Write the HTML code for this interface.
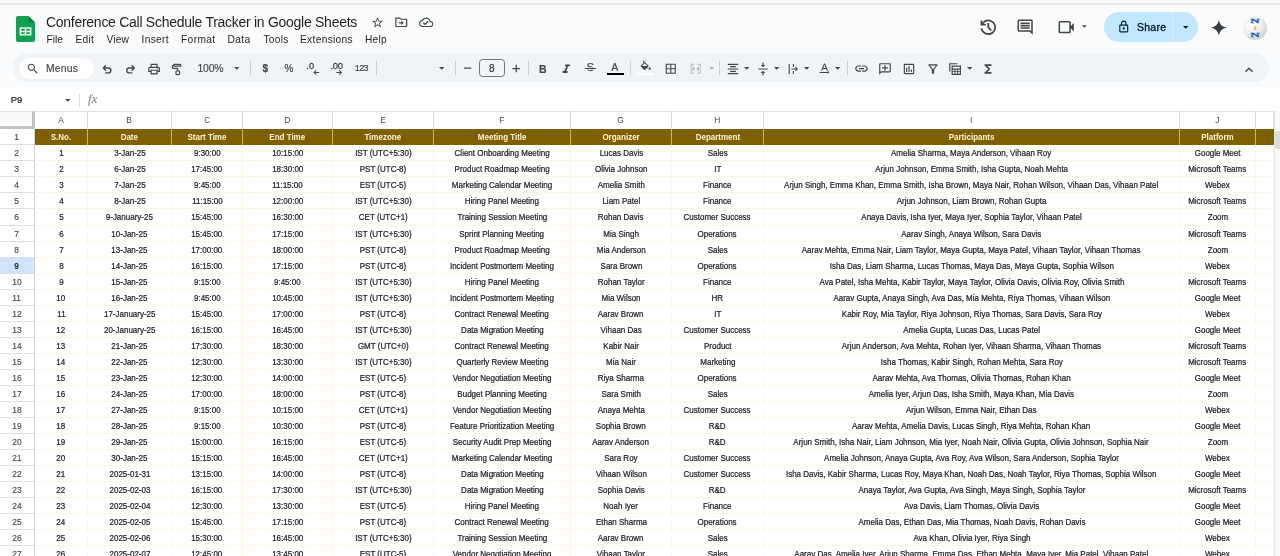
<!DOCTYPE html><html><head><meta charset="utf-8"><title>Conference Call Schedule Tracker in Google Sheets</title><style>
*{box-sizing:border-box;margin:0;padding:0}
html,body{width:1280px;height:556px;overflow:hidden}
body{background:#f9fbfd;font-family:"Liberation Sans",sans-serif;color:#1f1f1f;position:relative}
.abs{position:absolute}
#topband{position:absolute;left:0;top:0;width:1280px;height:3px;background:#fafafa}
#topline{position:absolute;left:0;top:3px;width:1280px;height:2px;background:#e8e8e8}
#title{position:absolute;left:46px;top:14.3px;font-size:14px;line-height:16px;color:#1f1f1f;white-space:nowrap;letter-spacing:-0.276px}
.menu{position:absolute;top:33.5px;font-size:10.2px;line-height:12px;color:#1f1f1f;white-space:nowrap}
#tb{position:absolute;left:12.5px;top:53px;width:1256.5px;height:29.2px;border-radius:14.6px;background:#f0f4f9}
#search{position:absolute;left:19px;top:58px;width:75px;height:21px;border-radius:11px;background:#fff}
.tbt{position:absolute;font-size:10px;line-height:12px;color:#444746;white-space:nowrap;-webkit-text-stroke:0.15px #444746}
.sep{position:absolute;width:1px;background:#c7c7c7}
#fbar{position:absolute;left:0;top:87px;width:1280px;height:24px;background:#fff;border-top:1px solid #fcfdfe}
#grid{position:absolute;left:0;top:0;width:1280px;height:556px;pointer-events:none}
.chrow{position:absolute;left:0;width:1280px;background:#fff;border-top:1px solid #e1e1e1}
.corner{position:absolute;left:0;background:#f8f9fa;border-right:3px solid #c3c4c5;border-bottom:3px solid #c3c4c5;border-top:1px solid #e1e1e1}
.ch{position:absolute;background:#fff;border-right:1px solid #d9d9d9;border-top:1px solid #e1e1e1;font-size:9px;line-height:16px;text-align:center;color:#444746}
.hdrbg{position:absolute;background:#7f6000}
.hc{position:absolute;border-right:1px solid #d9b650;font-size:8.6px;font-weight:700;line-height:17px;text-align:center;color:#fff5d4;white-space:nowrap}
.rh{position:absolute;left:0;background:#fff;border-right:1px solid #d3d5d8;border-bottom:1px solid #dcdfe2;font-size:9px;line-height:16px;-webkit-text-stroke:0.15px #444746;text-align:center;color:#444746}
.rh.sel{background:#d3e3fd;color:#0b2a5c;font-weight:700;-webkit-text-stroke:0}
.c{position:absolute;background:#fff;border-right:1px solid #fef7e8;border-bottom:1px solid #fef6e6;font-size:8.6px;line-height:16px;text-align:center;color:#1a1a1a;-webkit-text-stroke:0.22px #1a1a1a;white-space:nowrap;overflow:hidden}
.vsb{position:absolute;left:1274px;top:111px;width:6px;height:445px;background:#f8f9fa;border-left:1px solid #e4e4e4}
.vthumb{position:absolute;left:1275px;top:131px;width:5px;height:18px;background:#dadce0;border-radius:2px 0 0 2px}

.t{display:inline-block;transform:scaleX(0.93);transform-origin:50% 50%}

#share{position:absolute;left:1104px;top:11.5px;width:93.5px;height:30.5px;border-radius:15.5px;background:#c2e7ff}
#sharediv{position:absolute;left:1172px;top:11.5px;width:1px;height:30.5px;background:#d9effd}
#sharetxt{position:absolute;left:1137px;top:20.5px;font-size:10.5px;line-height:12px;font-weight:400;letter-spacing:0.244px;-webkit-text-stroke:0.35px #001d35;color:#001d35}

#grid,#topwrap{will-change:transform}

.hc.last{border-right:none}

</style></head><body>
<div id="topwrap"><div id="topband"></div><div id="topline"></div>
<svg class="abs" style="left:16px;top:16px" width="19" height="26" viewBox="0 0 19 26">
<path d="M2 0h10.5L19 6.5V24a2 2 0 0 1-2 2H2a2 2 0 0 1-2-2V2a2 2 0 0 1 2-2z" fill="#12a150"/>
<path d="M12.5 0L19 6.5h-4.7a1.8 1.8 0 0 1-1.8-1.8z" fill="#0b8040"/>
<path d="M3.6 11.2h11.8v8.4H3.6zM5.2 12.8v1.9h3.5v-1.9zm5.1 0v1.9h3.5v-1.9zM5.2 16.2V18h3.5v-1.8zm5.1 0V18h3.5v-1.8z" fill="#e8f6ee" fill-rule="evenodd"/>
</svg>
<div id="title">Conference Call Schedule Tracker in Google Sheets</div>
<svg class="abs" style="left:371.20px;top:15.50px" width="13" height="13" viewBox="0 0 24 24" fill="#444746" ><path d="M22 9.24l-7.19-.62L12 2 9.19 8.63 2 9.24l5.46 4.73L5.82 21 12 17.27 18.18 21l-1.63-7.03L22 9.24zM12 15.4l-3.76 2.27 1-4.28-3.32-2.88 4.38-.38L12 6.1l1.71 4.04 4.38.38-3.32 2.88 1 4.28L12 15.4z"/></svg>
<svg class="abs" style="left:394.25px;top:14.95px" width="14.5" height="14.5" viewBox="0 0 24 24" fill="#444746" ><path d="M20 6h-8l-2-2H4c-1.1 0-2 .9-2 2v12c0 1.1.9 2 2 2h16c1.1 0 2-.9 2-2V8c0-1.1-.9-2-2-2zm0 12H4V6h5.17l2 2H20v10zm-8.01-1l4-4-4-4v3h-4v2h4v3z"/></svg>
<svg class="abs" style="left:418.75px;top:15.05px" width="14.5" height="14.5" viewBox="0 0 24 24" fill="#444746" ><path d="M19.35 10.04C18.67 6.59 15.64 4 12 4 9.11 4 6.6 5.64 5.35 8.04 2.34 8.36 0 10.91 0 14c0 3.31 2.69 6 6 6h13c2.76 0 5-2.24 5-5 0-2.64-2.05-4.78-4.65-4.96zM19 18H6c-2.21 0-4-1.79-4-4 0-2.05 1.53-3.76 3.56-3.97l1.07-.11.5-.95C8.08 7.14 9.94 6 12 6c2.62 0 4.88 1.86 5.39 4.43l.3 1.5 1.53.11c1.56.1 2.78 1.41 2.78 2.96 0 1.65-1.35 3-3 3zm-9-3.82l-2.09-2.09L6.5 13.5 10 17l6.01-6.01-1.41-1.41z"/></svg>
<div class="menu" style="left:46.5px;letter-spacing:0.02px">File</div>
<div class="menu" style="left:75.5px;letter-spacing:0.234px">Edit</div>
<div class="menu" style="left:106.5px;letter-spacing:0.148px">View</div>
<div class="menu" style="left:141.5px;letter-spacing:0.336px">Insert</div>
<div class="menu" style="left:181px;letter-spacing:0.372px">Format</div>
<div class="menu" style="left:227.5px;letter-spacing:0.367px">Data</div>
<div class="menu" style="left:263.5px;letter-spacing:0.244px">Tools</div>
<div class="menu" style="left:300px;letter-spacing:0.316px">Extensions</div>
<div class="menu" style="left:365px;letter-spacing:0.262px">Help</div>
<svg class="abs" style="left:978.20px;top:16.70px" width="20.6" height="20.6" viewBox="0 0 24 24" fill="#444746" ><path d="M12 21q-3.450 0-6.012-2.287T3.050 13H5.100q.350 2.600 2.313 4.300T12 19q2.925 0 4.963-2.037T19 12t-2.037-4.963T12 5q-1.725 0-3.225.800T6.250 8H9v2H3V4h2v2.350q1.275-1.600 3.113-2.475T12 3q1.875 0 3.513.713t2.850 1.924 1.925 2.850T21 12t-.712 3.513-1.925 2.850-2.850 1.925T12 21m2.800-4.800L11 12.400V7h2v4.600l3.200 3.200z"/></svg>
<svg class="abs" style="left:1016.05px;top:18.15px" width="18.3" height="18.3" viewBox="0 0 24 24" fill="#444746" ><path d="M21.99 4c0-1.1-.89-2-1.99-2H4c-1.1 0-2 .9-2 2v12c0 1.1.9 2 2 2h14l4 4-.01-18zM20 4v13.17L18.83 16H4V4h16zM6 12h12v2H6zm0-3h12v2H6zm0-3h12v2H6z"/></svg>
<svg class="abs" style="left:1056.85px;top:18.20px" width="18.4" height="18.4" viewBox="0 0 24 24" fill="#444746" ><path d="M4 20q-.825 0-1.412-.587T2 18V6q0-.825.588-1.412T4 4h12q.825 0 1.413.588T18 6v4.500l4-4v11l-4-4V18q0 .825-.587 1.413T16 20zm0-2h12V6H4z"/></svg>
<svg class="abs" style="left:1082.10px;top:25.15px" width="4.8" height="2.9" viewBox="0 0 10 5" fill="#444746"><path d="M0 0h10L5 5z"/></svg>
<div id="share"></div><div id="sharediv"></div>
<svg class="abs" style="left:1116.95px;top:20.25px" width="13.5" height="13.5" viewBox="0 0 24 24" fill="#001d35" ><path d="M18 8h-1V6c0-2.76-2.24-5-5-5S7 3.24 7 6v2H6c-1.1 0-2 .9-2 2v10c0 1.1.9 2 2 2h12c1.1 0 2-.9 2-2V10c0-1.1-.9-2-2-2zM9 6c0-1.66 1.34-3 3-3s3 1.34 3 3v2H9V6zm9 14H6V10h12v10zm-6-3c1.1 0 2-.9 2-2s-.9-2-2-2-2 .9-2 2 .9 2 2 2z"/></svg>
<div id="sharetxt">Share</div>
<svg class="abs" style="left:1182.80px;top:26.05px" width="5.4" height="2.9" viewBox="0 0 10 5" fill="#001d35"><path d="M0 0h10L5 5z"/></svg>
<svg class="abs" style="left:1211.20px;top:19.60px" width="15.6" height="15.6" viewBox="0 0 24 24" fill="#3a3d40" ><path d="M12 0Q13.800 10.200 24 12 13.800 13.800 12 24 10.200 13.800 0 12 10.200 10.200 12 0z"/></svg>
<svg class="abs" style="left:1243px;top:15.5px" width="24" height="24" viewBox="0 0 24 24">
<defs><radialGradient id="av" cx="35%" cy="35%" r="75%"><stop offset="0" stop-color="#ffffff"/><stop offset="0.6" stop-color="#ececec"/><stop offset="1" stop-color="#c9c9c9"/></radialGradient></defs>
<circle cx="12" cy="12" r="12" fill="url(#av)"/>
<g font-family="Liberation Serif" font-weight="700" text-anchor="middle">
<text transform="translate(12.100,7.300) scale(1.950,1)" font-size="6.600" fill="#1a62b8" stroke="#1a62b8" stroke-width="0.250">N</text>
<text transform="translate(12.100,14) scale(1.300,1)" font-size="5.600" fill="#f0a51e" stroke="#f0a51e" stroke-width="0.200">t</text>
<text transform="translate(12.100,21.300) scale(1.950,1)" font-size="6.600" fill="#1a62b8" stroke="#1a62b8" stroke-width="0.250">N</text></g>
</svg>
<div id="tb"></div><div id="search"></div>
<svg class="abs" style="left:25.75px;top:62.25px" width="13.5" height="13.5" viewBox="0 0 24 24" fill="#444746" ><path d="M15.5 14h-.79l-.28-.27C15.41 12.59 16 11.11 16 9.5 16 5.91 13.09 3 9.5 3S3 5.91 3 9.5 5.91 16 9.5 16c1.61 0 3.09-.59 4.23-1.57l.27.28v.79l5 4.99L20.49 19l-4.99-5zm-6 0C7.01 14 5 11.99 5 9.5S7.01 5 9.5 5 14 7.01 14 9.5 11.99 14 9.5 14z"/></svg>
<div class="tbt" style="left:46px;top:62.5px;font-size:10.4px;letter-spacing:0.163px">Menus</div>
<svg class="abs" style="left:100px;top:62px" width="40" height="14" viewBox="100 62 40 14" fill="none" stroke="#444746" stroke-width="1.35" stroke-linejoin="miter"><path d="M106 65.300L103.300 68 106 70.700M103.500 68H108.400A2.450 2.450 0 0 1 108.400 72.900H105.200"/><path d="M131.600 65.300L134.300 68 131.600 70.700M134.100 68H129.200A2.450 2.450 0 0 0 129.200 72.900H132.400"/></svg>
<svg class="abs" style="left:147.00px;top:61.90px" width="14.2" height="14.2" viewBox="0 0 24 24" fill="#444746" ><path d="M16 8V5H8v3H6V3h12v5zm2 4.5q.425 0 .713-.288T19 11.5t-.288-.712T18 10.5t-.712.288T17 11.5t.288.713.712.287M16 19v-4H8v4zm2 2H6v-4H2v-6q0-1.275.875-2.137T5 8h14q1.275 0 2.138.863T22 11v6h-4zm2-6v-4q0-.425-.288-.712T19 10H5q-.425 0-.712.288T4 11v4h2v-2h12v2z"/></svg>
<svg class="abs" style="left:169.80px;top:62.10px" width="14.4" height="14.4" viewBox="0 0 24 24" fill="#444746" ><path d="M11 22q-.825 0-1.412-.587T9 20v-4q0-.825.588-1.412T11 14h1v-2.5H5q-.825 0-1.412-.587T3 9.5v-4h2.025V5q0-.825.588-1.412T7.025 3H17q.825 0 1.413.588T19 5v1q0 .825-.587 1.413T17 8H7.025q-.825 0-1.412-.587T5.025 7v-.5H5v3h7q.825 0 1.413.588T14 10.5V14h1q.825 0 1.413.588T17 16v4q0 .825-.587 1.413T15 22zM7.025 6H17V5H7.025zM11 20h4v-4h-4z"/></svg>
<div class="tbt" style="left:197.5px;top:62.5px;font-size:10.4px;letter-spacing:-0.2px">100%</div>
<svg class="abs" style="left:234.30px;top:67.15px" width="5.4" height="2.9" viewBox="0 0 10 5" fill="#444746"><path d="M0 0h10L5 5z"/></svg>
<div class="sep" style="left:250px;top:61px;height:14px;background:#cdd1d6"></div>
<div class="tbt" style="left:262.4px;top:62.5px;font-size:10px;font-weight:700">$</div>
<div class="tbt" style="left:284.4px;top:62.5px;font-size:10px;letter-spacing:0;-webkit-text-stroke:0.2px #444746">%</div>
<div class="tbt" style="left:306.3px;top:60.1px;font-size:9.4px;-webkit-text-stroke:0.3px #444746">.0</div>
<svg class="abs" style="left:313.25px;top:70.10px" width="6.5" height="5" viewBox="0 0 10 8.5" fill="#444746" ><path d="M10 3.5H3.2L5.6 1.1 4.5 0 0 4.25 4.5 8.5l1.1-1.1L3.2 5h6.8z"/></svg>
<div class="tbt" style="left:330.5px;top:60.1px;font-size:9.4px;letter-spacing:-0.3px;-webkit-text-stroke:0.3px #444746">.00</div>
<svg class="abs" style="left:336.25px;top:70.10px" width="6.5" height="5" viewBox="0 0 10 8.5" fill="#444746" ><path d="M0 3.5h6.8L4.4 1.1 5.5 0 10 4.25 5.5 8.5 4.4 7.4 6.8 5H0z"/></svg>
<div class="tbt" style="left:354.8px;top:62.3px;font-size:9px;letter-spacing:-0.6px;-webkit-text-stroke:0.2px #444746">123</div>
<div class="sep" style="left:376px;top:61px;height:14px;background:#cdd1d6"></div>
<svg class="abs" style="left:438.90px;top:67.15px" width="5.4" height="2.9" viewBox="0 0 10 5" fill="#444746"><path d="M0 0h10L5 5z"/></svg>
<div class="sep" style="left:455px;top:61px;height:14px;background:#cdd1d6"></div>
<svg class="abs" style="left:460px;top:62px" width="64" height="14" viewBox="460 62 64 14" stroke="#444746" stroke-width="1.250" fill="none"><path d="M464 68.050H471.200M512.400 68.500H520M516.200 64.700V72.300"/></svg>
<div class="abs" style="left:479px;top:59px;width:25.5px;height:18px;border:1px solid #747775;border-radius:3.5px"></div>
<div class="tbt" style="left:479px;top:62.5px;width:25.5px;text-align:center;color:#1f1f1f">8</div>
<div class="sep" style="left:528px;top:61px;height:14px;background:#cdd1d6"></div>
<div class="tbt" style="left:539px;top:62.5px;font-size:10.5px;font-weight:700">B</div>
<svg class="abs" style="left:559.40px;top:62.10px" width="14.6" height="14.6" viewBox="0 0 24 24" fill="#444746" ><path d="M10 4v3h2.210l-3.420 8H6v3h8v-3h-2.210l3.420-8H18V4z"/></svg>
<div class="tbt" style="left:586.6px;top:61.4px;font-size:11.4px;-webkit-text-stroke:0.25px #444746">S</div><div class="abs" style="left:584.8px;top:67.9px;width:11.7px;height:1.2px;box-shadow:0 0 0 0.6px #f0f4f9;background:#444746"></div>
<div class="tbt" style="left:611.2px;top:60.6px;font-size:10.5px;-webkit-text-stroke:0.2px #444746">A</div><div class="abs" style="left:607px;top:72.6px;width:16.7px;height:2.5px;background:#000"></div>
<div class="sep" style="left:630px;top:61px;height:14px;background:#cdd1d6"></div>
<svg class="abs" style="left:638.80px;top:59.40px" width="12.4" height="12.4" viewBox="0 -1 22 19" fill="#444746" ><path d="M16.56 8.94L7.62 0 6.21 1.41l2.38 2.38-5.15 5.15c-.59.59-.59 1.54 0 2.12l5.5 5.5c.29.29.68.44 1.06.44s.77-.15 1.06-.44l5.5-5.5c.59-.58.59-1.53 0-2.12zM5.21 10L10 5.21 14.79 10H5.21zM19 11.5s-2 2.17-2 3.5c0 1.1.9 2 2 2s2-.9 2-2c0-1.33-2-3.500-2-3.500z"/></svg>
<div class="abs" style="left:636.7px;top:72.8px;width:17.6px;height:2.4px;background:#fdfeff"></div>
<svg class="abs" style="left:663.75px;top:62.25px" width="13.5" height="13.5" viewBox="0 0 24 24" fill="#444746" ><path d="M3 3v18h18V3H3zm8 16H5v-6h6v6zm0-8H5V5h6v6zm8 8h-6v-6h6v6zm0-8h-6V5h6v6z"/></svg>
<svg class="abs" style="left:688.85px;top:62.25px" width="13.5" height="13.5" viewBox="0 0 24 24" fill="#b4b6b5" ><path d="M3 3h6v2H5v4H3zM15 3h6v6h-2V5h-4zM3 15h2v4h4v2H3zM19 15h2v6h-6v-2h4zM2 11h5.200L5.600 9.400 7 8l4 4-4 4-1.400-1.400L7.200 13H2zM22 11h-5.200l1.600-1.600L17 8l-4 4 4 4 1.400-1.400L16.800 13H22z"/></svg>
<svg class="abs" style="left:709.00px;top:67.25px" width="5.4" height="2.9" viewBox="0 0 10 5" fill="#b4b6b5"><path d="M0 0h10L5 5z"/></svg>
<div class="sep" style="left:719px;top:61px;height:14px;background:#cdd1d6"></div>
<svg class="abs" style="left:725.60px;top:62.00px" width="14" height="14" viewBox="0 0 24 24" fill="#444746" ><path d="M3 3h18v2H3zM7 7h10v2H7zM3 11h18v2H3zM7 15h10v2H7zM3 19h18v2H3z"/></svg>
<svg class="abs" style="left:743.50px;top:67.15px" width="5.4" height="2.9" viewBox="0 0 10 5" fill="#444746"><path d="M0 0h10L5 5z"/></svg>
<svg class="abs" style="left:756.40px;top:62.00px" width="14" height="14" viewBox="0 0 24 24" fill="#444746" ><path d="M8 19h3v4h2v-4h3l-4-4-4 4zm8-14h-3V1h-2v4H8l4 4 4-4zM4 11v2h16v-2H4z"/></svg>
<svg class="abs" style="left:773.50px;top:67.15px" width="5.4" height="2.9" viewBox="0 0 10 5" fill="#444746"><path d="M0 0h10L5 5z"/></svg>
<svg class="abs" style="left:786.10px;top:62.00px" width="14" height="14" viewBox="0 0 24 24" fill="#444746" ><path d="M4.600 3.500h1.900v17H4.600zM11.600 3.500h1.900v5h-1.900zM11.600 15.500h1.900v5h-1.900zM16.800 8.300l-1.300 1.300 1.500 1.450H9.200v1.900H17l-1.500 1.450 1.300 1.300L20.600 12z"/></svg>
<svg class="abs" style="left:804.00px;top:67.15px" width="5.4" height="2.9" viewBox="0 0 10 5" fill="#444746"><path d="M0 0h10L5 5z"/></svg>
<svg class="abs" style="left:817.40px;top:61.30px" width="15" height="15" viewBox="0 0 24 24" fill="#444746" ><path d="M12.750 3h-1.500L6.500 14h2.100l.9-2.200h5l.9 2.200h2.100L12.750 3zm-2.620 7L12 4.980 13.870 10h-3.740zM20 17l-3-2.500V16.500H4v1.500h13V19.500z" transform="translate(0,1)"/></svg>
<svg class="abs" style="left:835.00px;top:67.15px" width="5.4" height="2.9" viewBox="0 0 10 5" fill="#444746"><path d="M0 0h10L5 5z"/></svg>
<div class="sep" style="left:846.5px;top:61px;height:14px;background:#cdd1d6"></div>
<svg class="abs" style="left:854.00px;top:61.30px" width="15" height="15" viewBox="0 0 24 24" fill="#444746" ><path d="M3.9 12c0-1.710 1.390-3.100 3.100-3.100h4V7H7c-2.760 0-5 2.240-5 5s2.240 5 5 5h4v-1.900H7c-1.710 0-3.100-1.390-3.100-3.100zM8 13h8v-2H8v2zm9-6h-4v1.900h4c1.710 0 3.100 1.390 3.100 3.100s-1.390 3.100-3.100 3.100h-4V17h4c2.760 0 5-2.240 5-5s-2.240-5-5-5z"/></svg>
<svg class="abs" style="left:878.00px;top:61.80px" width="14" height="14" viewBox="0 0 24 24" fill="#444746" ><path d="M22 4c0-1.100-.900-2-2-2H4c-1.100 0-2 .900-2 2v12c0 1.100.900 2 2 2h14l4 4V4zm-2 13.170L18.830 16H4V4h16v13.170zM13 5h-2v4H7v2h4v4h2v-4h4V9h-4V5z" transform="scale(-1,1) translate(-24,0)"/></svg>
<svg class="abs" style="left:902.10px;top:62.00px" width="14" height="14" viewBox="0 0 24 24" fill="#444746" ><path d="M19 3H5c-1.100 0-2 .900-2 2v14c0 1.100.900 2 2 2h14c1.100 0 2-.900 2-2V5c0-1.100-.900-2-2-2zm0 16H5V5h14v14zM7 10h2v7H7zm4-3h2v10h-2zm4 6h2v4h-2z"/></svg>
<svg class="abs" style="left:926.40px;top:61.60px" width="14" height="14" viewBox="0 0 24 24" fill="#444746" ><path d="M7 6h10l-5.010 6.300L7 6zm-2.750-.390C6.270 8.200 10 13 10 13v6c0 .550.450 1 1 1h2c.550 0 1-.450 1-1v-6s3.720-4.800 5.740-7.390A.998.998 0 0 0 18.950 4H5.040c-.830 0-1.300.950-.790 1.610z"/></svg>
<svg class="abs" style="left:947.70px;top:61.80px" width="14.2" height="14.2" viewBox="0 0 24 24" fill="#444746" ><path d="M2 2h14v2H4v12H2zM6 6h16v16H6zm2 2v3h12V8zm0 5v2.500h3V13zm4.500 0v2.500h3V13zm4.500 0v2.500h3V13zM8 17v3h3v-3zm4.500 0v3h3v-3zm4.500 0v3h3v-3z" fill-rule="evenodd"/></svg>
<svg class="abs" style="left:966.60px;top:67.15px" width="5.4" height="2.9" viewBox="0 0 10 5" fill="#444746"><path d="M0 0h10L5 5z"/></svg>
<svg class="abs" style="left:980.70px;top:62.00px" width="14" height="14" viewBox="0 0 24 24" fill="#444746" ><path d="M18 4H6v2l6.500 6L6 18v2h12v-3h-7l5-5-5-5h7V4z"/></svg>
<svg class="abs" style="left:1241.30px;top:61.60px" width="16" height="16" viewBox="0 0 24 24" fill="#444746" ><path d="M12 8l-6 6 1.410 1.410L12 10.830l4.590 4.580L18 14l-6-6z"/></svg>
<div id="fbar"></div>
<div class="abs" style="left:10.7px;top:94.5px;font-size:9.5px;line-height:10px;color:#1f1f1f;-webkit-text-stroke:0.2px #1f1f1f;letter-spacing:-0.06px">P9</div>
<svg class="abs" style="left:64.90px;top:98.80px" width="5.6" height="2.8" viewBox="0 0 10 5" fill="#444746"><path d="M0 0h10L5 5z"/></svg>
<div class="sep" style="left:79px;top:94px;height:12.5px;background:#dadce0"></div>
<div class="abs" style="left:88px;top:92.5px;font-size:12.5px;line-height:13px;font-family:'Liberation Serif',serif;font-style:italic;color:#8c9196;letter-spacing:0.4px;-webkit-text-stroke:0.2px #8c9196">fx</div></div>
<div id="grid">
<div class="chrow" style="top:111px;height:18px"></div>
<div class="corner" style="top:111px;height:18px;width:35px"></div>
<div class="ch" style="left:35px;width:53px;top:111px;height:18px"><span class="t">A</span></div>
<div class="ch" style="left:88px;width:84px;top:111px;height:18px"><span class="t">B</span></div>
<div class="ch" style="left:172px;width:71px;top:111px;height:18px"><span class="t">C</span></div>
<div class="ch" style="left:243px;width:90px;top:111px;height:18px"><span class="t">D</span></div>
<div class="ch" style="left:333px;width:101px;top:111px;height:18px"><span class="t">E</span></div>
<div class="ch" style="left:434px;width:137px;top:111px;height:18px"><span class="t">F</span></div>
<div class="ch" style="left:571px;width:101px;top:111px;height:18px"><span class="t">G</span></div>
<div class="ch" style="left:672px;width:92px;top:111px;height:18px"><span class="t">H</span></div>
<div class="ch" style="left:764px;width:416px;top:111px;height:18px"><span class="t">I</span></div>
<div class="ch" style="left:1180px;width:76px;top:111px;height:18px"><span class="t">J</span></div>
<div class="ch" style="left:1256px;width:18px;top:111px;height:18px"></div>
<div class="hdrbg" style="top:129px;height:16px;left:35px;width:1239px"></div>
<div class="hc" style="left:35px;width:53px;top:129px;height:16px"><span class="t">S.No.</span></div>
<div class="hc" style="left:88px;width:84px;top:129px;height:16px"><span class="t">Date</span></div>
<div class="hc" style="left:172px;width:71px;top:129px;height:16px"><span class="t">Start Time</span></div>
<div class="hc" style="left:243px;width:90px;top:129px;height:16px"><span class="t">End Time</span></div>
<div class="hc" style="left:333px;width:101px;top:129px;height:16px"><span class="t">Timezone</span></div>
<div class="hc" style="left:434px;width:137px;top:129px;height:16px"><span class="t">Meeting Title</span></div>
<div class="hc" style="left:571px;width:101px;top:129px;height:16px"><span class="t">Organizer</span></div>
<div class="hc" style="left:672px;width:92px;top:129px;height:16px"><span class="t">Department</span></div>
<div class="hc" style="left:764px;width:416px;top:129px;height:16px"><span class="t">Participants</span></div>
<div class="hc" style="left:1180px;width:76px;top:129px;height:16px"><span class="t">Platform</span></div>
<div class="hc last" style="left:1256px;width:18px;top:129px;height:16px"></div>
<div class="rh" style="top:129px;height:16px;width:35px"><span class="t">1</span></div>
<div class="rh" style="top:145px;height:16px;width:35px"><span class="t">2</span></div>
<div class="rh" style="top:161px;height:16px;width:35px"><span class="t">3</span></div>
<div class="rh" style="top:177px;height:16px;width:35px"><span class="t">4</span></div>
<div class="rh" style="top:193px;height:16px;width:35px"><span class="t">5</span></div>
<div class="rh" style="top:209px;height:17px;width:35px"><span class="t">6</span></div>
<div class="rh" style="top:226px;height:16px;width:35px"><span class="t">7</span></div>
<div class="rh" style="top:242px;height:16px;width:35px"><span class="t">8</span></div>
<div class="rh sel" style="top:258px;height:16px;width:35px"><span class="t">9</span></div>
<div class="rh" style="top:274px;height:16px;width:35px"><span class="t">10</span></div>
<div class="rh" style="top:290px;height:16px;width:35px"><span class="t">11</span></div>
<div class="rh" style="top:306px;height:16px;width:35px"><span class="t">12</span></div>
<div class="rh" style="top:322px;height:16px;width:35px"><span class="t">13</span></div>
<div class="rh" style="top:338px;height:16px;width:35px"><span class="t">14</span></div>
<div class="rh" style="top:354px;height:16px;width:35px"><span class="t">15</span></div>
<div class="rh" style="top:370px;height:16px;width:35px"><span class="t">16</span></div>
<div class="rh" style="top:386px;height:16px;width:35px"><span class="t">17</span></div>
<div class="rh" style="top:402px;height:16px;width:35px"><span class="t">18</span></div>
<div class="rh" style="top:418px;height:16px;width:35px"><span class="t">19</span></div>
<div class="rh" style="top:434px;height:16px;width:35px"><span class="t">20</span></div>
<div class="rh" style="top:450px;height:16px;width:35px"><span class="t">21</span></div>
<div class="rh" style="top:466px;height:16px;width:35px"><span class="t">22</span></div>
<div class="rh" style="top:482px;height:16px;width:35px"><span class="t">23</span></div>
<div class="rh" style="top:498px;height:16px;width:35px"><span class="t">24</span></div>
<div class="rh" style="top:514px;height:16px;width:35px"><span class="t">25</span></div>
<div class="rh" style="top:530px;height:16px;width:35px"><span class="t">26</span></div>
<div class="rh" style="top:546px;height:16px;width:35px"><span class="t">27</span></div>
<div class="c" style="left:35px;width:53px;top:145px;height:16px"><span class="t">1</span></div>
<div class="c" style="left:88px;width:84px;top:145px;height:16px"><span class="t">3-Jan-25</span></div>
<div class="c" style="left:172px;width:71px;top:145px;height:16px"><span class="t">9:30:00</span></div>
<div class="c" style="left:243px;width:90px;top:145px;height:16px"><span class="t">10:15:00</span></div>
<div class="c" style="left:333px;width:101px;top:145px;height:16px"><span class="t">IST (UTC+5:30)</span></div>
<div class="c" style="left:434px;width:137px;top:145px;height:16px"><span class="t">Client Onboarding Meeting</span></div>
<div class="c" style="left:571px;width:101px;top:145px;height:16px"><span class="t">Lucas Davis</span></div>
<div class="c" style="left:672px;width:92px;top:145px;height:16px"><span class="t">Sales</span></div>
<div class="c" style="left:764px;width:416px;top:145px;height:16px"><span class="t">Amelia Sharma, Maya Anderson, Vihaan Roy</span></div>
<div class="c" style="left:1180px;width:76px;top:145px;height:16px"><span class="t">Google Meet</span></div>
<div class="c" style="left:1256px;width:18px;top:145px;height:16px"></div>
<div class="c" style="left:35px;width:53px;top:161px;height:16px"><span class="t">2</span></div>
<div class="c" style="left:88px;width:84px;top:161px;height:16px"><span class="t">6-Jan-25</span></div>
<div class="c" style="left:172px;width:71px;top:161px;height:16px"><span class="t">17:45:00</span></div>
<div class="c" style="left:243px;width:90px;top:161px;height:16px"><span class="t">18:30:00</span></div>
<div class="c" style="left:333px;width:101px;top:161px;height:16px"><span class="t">PST (UTC-8)</span></div>
<div class="c" style="left:434px;width:137px;top:161px;height:16px"><span class="t">Product Roadmap Meeting</span></div>
<div class="c" style="left:571px;width:101px;top:161px;height:16px"><span class="t">Olivia Johnson</span></div>
<div class="c" style="left:672px;width:92px;top:161px;height:16px"><span class="t">IT</span></div>
<div class="c" style="left:764px;width:416px;top:161px;height:16px"><span class="t">Arjun Johnson, Emma Smith, Isha Gupta, Noah Mehta</span></div>
<div class="c" style="left:1180px;width:76px;top:161px;height:16px"><span class="t">Microsoft Teams</span></div>
<div class="c" style="left:1256px;width:18px;top:161px;height:16px"></div>
<div class="c" style="left:35px;width:53px;top:177px;height:16px"><span class="t">3</span></div>
<div class="c" style="left:88px;width:84px;top:177px;height:16px"><span class="t">7-Jan-25</span></div>
<div class="c" style="left:172px;width:71px;top:177px;height:16px"><span class="t">9:45:00</span></div>
<div class="c" style="left:243px;width:90px;top:177px;height:16px"><span class="t">11:15:00</span></div>
<div class="c" style="left:333px;width:101px;top:177px;height:16px"><span class="t">EST (UTC-5)</span></div>
<div class="c" style="left:434px;width:137px;top:177px;height:16px"><span class="t">Marketing Calendar Meeting</span></div>
<div class="c" style="left:571px;width:101px;top:177px;height:16px"><span class="t">Amelia Smith</span></div>
<div class="c" style="left:672px;width:92px;top:177px;height:16px"><span class="t">Finance</span></div>
<div class="c" style="left:764px;width:416px;top:177px;height:16px"><span class="t">Arjun Singh, Emma Khan, Emma Smith, Isha Brown, Maya Nair, Rohan Wilson, Vihaan Das, Vihaan Patel</span></div>
<div class="c" style="left:1180px;width:76px;top:177px;height:16px"><span class="t">Webex</span></div>
<div class="c" style="left:1256px;width:18px;top:177px;height:16px"></div>
<div class="c" style="left:35px;width:53px;top:193px;height:16px"><span class="t">4</span></div>
<div class="c" style="left:88px;width:84px;top:193px;height:16px"><span class="t">8-Jan-25</span></div>
<div class="c" style="left:172px;width:71px;top:193px;height:16px"><span class="t">11:15:00</span></div>
<div class="c" style="left:243px;width:90px;top:193px;height:16px"><span class="t">12:00:00</span></div>
<div class="c" style="left:333px;width:101px;top:193px;height:16px"><span class="t">IST (UTC+5:30)</span></div>
<div class="c" style="left:434px;width:137px;top:193px;height:16px"><span class="t">Hiring Panel Meeting</span></div>
<div class="c" style="left:571px;width:101px;top:193px;height:16px"><span class="t">Liam Patel</span></div>
<div class="c" style="left:672px;width:92px;top:193px;height:16px"><span class="t">Finance</span></div>
<div class="c" style="left:764px;width:416px;top:193px;height:16px"><span class="t">Arjun Johnson, Liam Brown, Rohan Gupta</span></div>
<div class="c" style="left:1180px;width:76px;top:193px;height:16px"><span class="t">Microsoft Teams</span></div>
<div class="c" style="left:1256px;width:18px;top:193px;height:16px"></div>
<div class="c" style="left:35px;width:53px;top:209px;height:17px"><span class="t">5</span></div>
<div class="c" style="left:88px;width:84px;top:209px;height:17px"><span class="t">9-January-25</span></div>
<div class="c" style="left:172px;width:71px;top:209px;height:17px"><span class="t">15:45:00</span></div>
<div class="c" style="left:243px;width:90px;top:209px;height:17px"><span class="t">16:30:00</span></div>
<div class="c" style="left:333px;width:101px;top:209px;height:17px"><span class="t">CET (UTC+1)</span></div>
<div class="c" style="left:434px;width:137px;top:209px;height:17px"><span class="t">Training Session Meeting</span></div>
<div class="c" style="left:571px;width:101px;top:209px;height:17px"><span class="t">Rohan Davis</span></div>
<div class="c" style="left:672px;width:92px;top:209px;height:17px"><span class="t">Customer Success</span></div>
<div class="c" style="left:764px;width:416px;top:209px;height:17px"><span class="t">Anaya Davis, Isha Iyer, Maya Iyer, Sophia Taylor, Vihaan Patel</span></div>
<div class="c" style="left:1180px;width:76px;top:209px;height:17px"><span class="t">Zoom</span></div>
<div class="c" style="left:1256px;width:18px;top:209px;height:17px"></div>
<div class="c" style="left:35px;width:53px;top:226px;height:16px"><span class="t">6</span></div>
<div class="c" style="left:88px;width:84px;top:226px;height:16px"><span class="t">10-Jan-25</span></div>
<div class="c" style="left:172px;width:71px;top:226px;height:16px"><span class="t">15:45:00</span></div>
<div class="c" style="left:243px;width:90px;top:226px;height:16px"><span class="t">17:15:00</span></div>
<div class="c" style="left:333px;width:101px;top:226px;height:16px"><span class="t">IST (UTC+5:30)</span></div>
<div class="c" style="left:434px;width:137px;top:226px;height:16px"><span class="t">Sprint Planning Meeting</span></div>
<div class="c" style="left:571px;width:101px;top:226px;height:16px"><span class="t">Mia Singh</span></div>
<div class="c" style="left:672px;width:92px;top:226px;height:16px"><span class="t">Operations</span></div>
<div class="c" style="left:764px;width:416px;top:226px;height:16px"><span class="t">Aarav Singh, Anaya Wilson, Sara Davis</span></div>
<div class="c" style="left:1180px;width:76px;top:226px;height:16px"><span class="t">Microsoft Teams</span></div>
<div class="c" style="left:1256px;width:18px;top:226px;height:16px"></div>
<div class="c" style="left:35px;width:53px;top:242px;height:16px"><span class="t">7</span></div>
<div class="c" style="left:88px;width:84px;top:242px;height:16px"><span class="t">13-Jan-25</span></div>
<div class="c" style="left:172px;width:71px;top:242px;height:16px"><span class="t">17:00:00</span></div>
<div class="c" style="left:243px;width:90px;top:242px;height:16px"><span class="t">18:00:00</span></div>
<div class="c" style="left:333px;width:101px;top:242px;height:16px"><span class="t">PST (UTC-8)</span></div>
<div class="c" style="left:434px;width:137px;top:242px;height:16px"><span class="t">Product Roadmap Meeting</span></div>
<div class="c" style="left:571px;width:101px;top:242px;height:16px"><span class="t">Mia Anderson</span></div>
<div class="c" style="left:672px;width:92px;top:242px;height:16px"><span class="t">Sales</span></div>
<div class="c" style="left:764px;width:416px;top:242px;height:16px"><span class="t">Aarav Mehta, Emma Nair, Liam Taylor, Maya Gupta, Maya Patel, Vihaan Taylor, Vihaan Thomas</span></div>
<div class="c" style="left:1180px;width:76px;top:242px;height:16px"><span class="t">Zoom</span></div>
<div class="c" style="left:1256px;width:18px;top:242px;height:16px"></div>
<div class="c" style="left:35px;width:53px;top:258px;height:16px"><span class="t">8</span></div>
<div class="c" style="left:88px;width:84px;top:258px;height:16px"><span class="t">14-Jan-25</span></div>
<div class="c" style="left:172px;width:71px;top:258px;height:16px"><span class="t">16:15:00</span></div>
<div class="c" style="left:243px;width:90px;top:258px;height:16px"><span class="t">17:15:00</span></div>
<div class="c" style="left:333px;width:101px;top:258px;height:16px"><span class="t">PST (UTC-8)</span></div>
<div class="c" style="left:434px;width:137px;top:258px;height:16px"><span class="t">Incident Postmortem Meeting</span></div>
<div class="c" style="left:571px;width:101px;top:258px;height:16px"><span class="t">Sara Brown</span></div>
<div class="c" style="left:672px;width:92px;top:258px;height:16px"><span class="t">Operations</span></div>
<div class="c" style="left:764px;width:416px;top:258px;height:16px"><span class="t">Isha Das, Liam Sharma, Lucas Thomas, Maya Das, Maya Gupta, Sophia Wilson</span></div>
<div class="c" style="left:1180px;width:76px;top:258px;height:16px"><span class="t">Webex</span></div>
<div class="c" style="left:1256px;width:18px;top:258px;height:16px"></div>
<div class="c" style="left:35px;width:53px;top:274px;height:16px"><span class="t">9</span></div>
<div class="c" style="left:88px;width:84px;top:274px;height:16px"><span class="t">15-Jan-25</span></div>
<div class="c" style="left:172px;width:71px;top:274px;height:16px"><span class="t">9:15:00</span></div>
<div class="c" style="left:243px;width:90px;top:274px;height:16px"><span class="t">9:45:00</span></div>
<div class="c" style="left:333px;width:101px;top:274px;height:16px"><span class="t">IST (UTC+5:30)</span></div>
<div class="c" style="left:434px;width:137px;top:274px;height:16px"><span class="t">Hiring Panel Meeting</span></div>
<div class="c" style="left:571px;width:101px;top:274px;height:16px"><span class="t">Rohan Taylor</span></div>
<div class="c" style="left:672px;width:92px;top:274px;height:16px"><span class="t">Finance</span></div>
<div class="c" style="left:764px;width:416px;top:274px;height:16px"><span class="t">Ava Patel, Isha Mehta, Kabir Taylor, Maya Taylor, Olivia Davis, Olivia Roy, Olivia Smith</span></div>
<div class="c" style="left:1180px;width:76px;top:274px;height:16px"><span class="t">Microsoft Teams</span></div>
<div class="c" style="left:1256px;width:18px;top:274px;height:16px"></div>
<div class="c" style="left:35px;width:53px;top:290px;height:16px"><span class="t">10</span></div>
<div class="c" style="left:88px;width:84px;top:290px;height:16px"><span class="t">16-Jan-25</span></div>
<div class="c" style="left:172px;width:71px;top:290px;height:16px"><span class="t">9:45:00</span></div>
<div class="c" style="left:243px;width:90px;top:290px;height:16px"><span class="t">10:45:00</span></div>
<div class="c" style="left:333px;width:101px;top:290px;height:16px"><span class="t">IST (UTC+5:30)</span></div>
<div class="c" style="left:434px;width:137px;top:290px;height:16px"><span class="t">Incident Postmortem Meeting</span></div>
<div class="c" style="left:571px;width:101px;top:290px;height:16px"><span class="t">Mia Wilson</span></div>
<div class="c" style="left:672px;width:92px;top:290px;height:16px"><span class="t">HR</span></div>
<div class="c" style="left:764px;width:416px;top:290px;height:16px"><span class="t">Aarav Gupta, Anaya Singh, Ava Das, Mia Mehta, Riya Thomas, Vihaan Wilson</span></div>
<div class="c" style="left:1180px;width:76px;top:290px;height:16px"><span class="t">Google Meet</span></div>
<div class="c" style="left:1256px;width:18px;top:290px;height:16px"></div>
<div class="c" style="left:35px;width:53px;top:306px;height:16px"><span class="t">11</span></div>
<div class="c" style="left:88px;width:84px;top:306px;height:16px"><span class="t">17-January-25</span></div>
<div class="c" style="left:172px;width:71px;top:306px;height:16px"><span class="t">15:45:00</span></div>
<div class="c" style="left:243px;width:90px;top:306px;height:16px"><span class="t">17:00:00</span></div>
<div class="c" style="left:333px;width:101px;top:306px;height:16px"><span class="t">PST (UTC-8)</span></div>
<div class="c" style="left:434px;width:137px;top:306px;height:16px"><span class="t">Contract Renewal Meeting</span></div>
<div class="c" style="left:571px;width:101px;top:306px;height:16px"><span class="t">Aarav Brown</span></div>
<div class="c" style="left:672px;width:92px;top:306px;height:16px"><span class="t">IT</span></div>
<div class="c" style="left:764px;width:416px;top:306px;height:16px"><span class="t">Kabir Roy, Mia Taylor, Riya Johnson, Riya Thomas, Sara Davis, Sara Roy</span></div>
<div class="c" style="left:1180px;width:76px;top:306px;height:16px"><span class="t">Webex</span></div>
<div class="c" style="left:1256px;width:18px;top:306px;height:16px"></div>
<div class="c" style="left:35px;width:53px;top:322px;height:16px"><span class="t">12</span></div>
<div class="c" style="left:88px;width:84px;top:322px;height:16px"><span class="t">20-January-25</span></div>
<div class="c" style="left:172px;width:71px;top:322px;height:16px"><span class="t">16:15:00</span></div>
<div class="c" style="left:243px;width:90px;top:322px;height:16px"><span class="t">16:45:00</span></div>
<div class="c" style="left:333px;width:101px;top:322px;height:16px"><span class="t">IST (UTC+5:30)</span></div>
<div class="c" style="left:434px;width:137px;top:322px;height:16px"><span class="t">Data Migration Meeting</span></div>
<div class="c" style="left:571px;width:101px;top:322px;height:16px"><span class="t">Vihaan Das</span></div>
<div class="c" style="left:672px;width:92px;top:322px;height:16px"><span class="t">Customer Success</span></div>
<div class="c" style="left:764px;width:416px;top:322px;height:16px"><span class="t">Amelia Gupta, Lucas Das, Lucas Patel</span></div>
<div class="c" style="left:1180px;width:76px;top:322px;height:16px"><span class="t">Google Meet</span></div>
<div class="c" style="left:1256px;width:18px;top:322px;height:16px"></div>
<div class="c" style="left:35px;width:53px;top:338px;height:16px"><span class="t">13</span></div>
<div class="c" style="left:88px;width:84px;top:338px;height:16px"><span class="t">21-Jan-25</span></div>
<div class="c" style="left:172px;width:71px;top:338px;height:16px"><span class="t">17:30:00</span></div>
<div class="c" style="left:243px;width:90px;top:338px;height:16px"><span class="t">18:30:00</span></div>
<div class="c" style="left:333px;width:101px;top:338px;height:16px"><span class="t">GMT (UTC+0)</span></div>
<div class="c" style="left:434px;width:137px;top:338px;height:16px"><span class="t">Contract Renewal Meeting</span></div>
<div class="c" style="left:571px;width:101px;top:338px;height:16px"><span class="t">Kabir Nair</span></div>
<div class="c" style="left:672px;width:92px;top:338px;height:16px"><span class="t">Product</span></div>
<div class="c" style="left:764px;width:416px;top:338px;height:16px"><span class="t">Arjun Anderson, Ava Mehta, Rohan Iyer, Vihaan Sharma, Vihaan Thomas</span></div>
<div class="c" style="left:1180px;width:76px;top:338px;height:16px"><span class="t">Microsoft Teams</span></div>
<div class="c" style="left:1256px;width:18px;top:338px;height:16px"></div>
<div class="c" style="left:35px;width:53px;top:354px;height:16px"><span class="t">14</span></div>
<div class="c" style="left:88px;width:84px;top:354px;height:16px"><span class="t">22-Jan-25</span></div>
<div class="c" style="left:172px;width:71px;top:354px;height:16px"><span class="t">12:30:00</span></div>
<div class="c" style="left:243px;width:90px;top:354px;height:16px"><span class="t">13:30:00</span></div>
<div class="c" style="left:333px;width:101px;top:354px;height:16px"><span class="t">IST (UTC+5:30)</span></div>
<div class="c" style="left:434px;width:137px;top:354px;height:16px"><span class="t">Quarterly Review Meeting</span></div>
<div class="c" style="left:571px;width:101px;top:354px;height:16px"><span class="t">Mia Nair</span></div>
<div class="c" style="left:672px;width:92px;top:354px;height:16px"><span class="t">Marketing</span></div>
<div class="c" style="left:764px;width:416px;top:354px;height:16px"><span class="t">Isha Thomas, Kabir Singh, Rohan Mehta, Sara Roy</span></div>
<div class="c" style="left:1180px;width:76px;top:354px;height:16px"><span class="t">Microsoft Teams</span></div>
<div class="c" style="left:1256px;width:18px;top:354px;height:16px"></div>
<div class="c" style="left:35px;width:53px;top:370px;height:16px"><span class="t">15</span></div>
<div class="c" style="left:88px;width:84px;top:370px;height:16px"><span class="t">23-Jan-25</span></div>
<div class="c" style="left:172px;width:71px;top:370px;height:16px"><span class="t">12:30:00</span></div>
<div class="c" style="left:243px;width:90px;top:370px;height:16px"><span class="t">14:00:00</span></div>
<div class="c" style="left:333px;width:101px;top:370px;height:16px"><span class="t">EST (UTC-5)</span></div>
<div class="c" style="left:434px;width:137px;top:370px;height:16px"><span class="t">Vendor Negotiation Meeting</span></div>
<div class="c" style="left:571px;width:101px;top:370px;height:16px"><span class="t">Riya Sharma</span></div>
<div class="c" style="left:672px;width:92px;top:370px;height:16px"><span class="t">Operations</span></div>
<div class="c" style="left:764px;width:416px;top:370px;height:16px"><span class="t">Aarav Mehta, Ava Thomas, Olivia Thomas, Rohan Khan</span></div>
<div class="c" style="left:1180px;width:76px;top:370px;height:16px"><span class="t">Google Meet</span></div>
<div class="c" style="left:1256px;width:18px;top:370px;height:16px"></div>
<div class="c" style="left:35px;width:53px;top:386px;height:16px"><span class="t">16</span></div>
<div class="c" style="left:88px;width:84px;top:386px;height:16px"><span class="t">24-Jan-25</span></div>
<div class="c" style="left:172px;width:71px;top:386px;height:16px"><span class="t">17:00:00</span></div>
<div class="c" style="left:243px;width:90px;top:386px;height:16px"><span class="t">18:00:00</span></div>
<div class="c" style="left:333px;width:101px;top:386px;height:16px"><span class="t">PST (UTC-8)</span></div>
<div class="c" style="left:434px;width:137px;top:386px;height:16px"><span class="t">Budget Planning Meeting</span></div>
<div class="c" style="left:571px;width:101px;top:386px;height:16px"><span class="t">Sara Smith</span></div>
<div class="c" style="left:672px;width:92px;top:386px;height:16px"><span class="t">Sales</span></div>
<div class="c" style="left:764px;width:416px;top:386px;height:16px"><span class="t">Amelia Iyer, Arjun Das, Isha Smith, Maya Khan, Mia Davis</span></div>
<div class="c" style="left:1180px;width:76px;top:386px;height:16px"><span class="t">Zoom</span></div>
<div class="c" style="left:1256px;width:18px;top:386px;height:16px"></div>
<div class="c" style="left:35px;width:53px;top:402px;height:16px"><span class="t">17</span></div>
<div class="c" style="left:88px;width:84px;top:402px;height:16px"><span class="t">27-Jan-25</span></div>
<div class="c" style="left:172px;width:71px;top:402px;height:16px"><span class="t">9:15:00</span></div>
<div class="c" style="left:243px;width:90px;top:402px;height:16px"><span class="t">10:15:00</span></div>
<div class="c" style="left:333px;width:101px;top:402px;height:16px"><span class="t">CET (UTC+1)</span></div>
<div class="c" style="left:434px;width:137px;top:402px;height:16px"><span class="t">Vendor Negotiation Meeting</span></div>
<div class="c" style="left:571px;width:101px;top:402px;height:16px"><span class="t">Anaya Mehta</span></div>
<div class="c" style="left:672px;width:92px;top:402px;height:16px"><span class="t">Customer Success</span></div>
<div class="c" style="left:764px;width:416px;top:402px;height:16px"><span class="t">Arjun Wilson, Emma Nair, Ethan Das</span></div>
<div class="c" style="left:1180px;width:76px;top:402px;height:16px"><span class="t">Webex</span></div>
<div class="c" style="left:1256px;width:18px;top:402px;height:16px"></div>
<div class="c" style="left:35px;width:53px;top:418px;height:16px"><span class="t">18</span></div>
<div class="c" style="left:88px;width:84px;top:418px;height:16px"><span class="t">28-Jan-25</span></div>
<div class="c" style="left:172px;width:71px;top:418px;height:16px"><span class="t">9:15:00</span></div>
<div class="c" style="left:243px;width:90px;top:418px;height:16px"><span class="t">10:30:00</span></div>
<div class="c" style="left:333px;width:101px;top:418px;height:16px"><span class="t">PST (UTC-8)</span></div>
<div class="c" style="left:434px;width:137px;top:418px;height:16px"><span class="t">Feature Prioritization Meeting</span></div>
<div class="c" style="left:571px;width:101px;top:418px;height:16px"><span class="t">Sophia Brown</span></div>
<div class="c" style="left:672px;width:92px;top:418px;height:16px"><span class="t">R&amp;D</span></div>
<div class="c" style="left:764px;width:416px;top:418px;height:16px"><span class="t">Aarav Mehta, Amelia Davis, Lucas Singh, Riya Mehta, Rohan Khan</span></div>
<div class="c" style="left:1180px;width:76px;top:418px;height:16px"><span class="t">Google Meet</span></div>
<div class="c" style="left:1256px;width:18px;top:418px;height:16px"></div>
<div class="c" style="left:35px;width:53px;top:434px;height:16px"><span class="t">19</span></div>
<div class="c" style="left:88px;width:84px;top:434px;height:16px"><span class="t">29-Jan-25</span></div>
<div class="c" style="left:172px;width:71px;top:434px;height:16px"><span class="t">15:00:00</span></div>
<div class="c" style="left:243px;width:90px;top:434px;height:16px"><span class="t">16:15:00</span></div>
<div class="c" style="left:333px;width:101px;top:434px;height:16px"><span class="t">EST (UTC-5)</span></div>
<div class="c" style="left:434px;width:137px;top:434px;height:16px"><span class="t">Security Audit Prep Meeting</span></div>
<div class="c" style="left:571px;width:101px;top:434px;height:16px"><span class="t">Aarav Anderson</span></div>
<div class="c" style="left:672px;width:92px;top:434px;height:16px"><span class="t">R&amp;D</span></div>
<div class="c" style="left:764px;width:416px;top:434px;height:16px"><span class="t">Arjun Smith, Isha Nair, Liam Johnson, Mia Iyer, Noah Nair, Olivia Gupta, Olivia Johnson, Sophia Nair</span></div>
<div class="c" style="left:1180px;width:76px;top:434px;height:16px"><span class="t">Zoom</span></div>
<div class="c" style="left:1256px;width:18px;top:434px;height:16px"></div>
<div class="c" style="left:35px;width:53px;top:450px;height:16px"><span class="t">20</span></div>
<div class="c" style="left:88px;width:84px;top:450px;height:16px"><span class="t">30-Jan-25</span></div>
<div class="c" style="left:172px;width:71px;top:450px;height:16px"><span class="t">15:15:00</span></div>
<div class="c" style="left:243px;width:90px;top:450px;height:16px"><span class="t">16:45:00</span></div>
<div class="c" style="left:333px;width:101px;top:450px;height:16px"><span class="t">CET (UTC+1)</span></div>
<div class="c" style="left:434px;width:137px;top:450px;height:16px"><span class="t">Marketing Calendar Meeting</span></div>
<div class="c" style="left:571px;width:101px;top:450px;height:16px"><span class="t">Sara Roy</span></div>
<div class="c" style="left:672px;width:92px;top:450px;height:16px"><span class="t">Customer Success</span></div>
<div class="c" style="left:764px;width:416px;top:450px;height:16px"><span class="t">Amelia Johnson, Anaya Gupta, Ava Roy, Ava Wilson, Sara Anderson, Sophia Taylor</span></div>
<div class="c" style="left:1180px;width:76px;top:450px;height:16px"><span class="t">Webex</span></div>
<div class="c" style="left:1256px;width:18px;top:450px;height:16px"></div>
<div class="c" style="left:35px;width:53px;top:466px;height:16px"><span class="t">21</span></div>
<div class="c" style="left:88px;width:84px;top:466px;height:16px"><span class="t">2025-01-31</span></div>
<div class="c" style="left:172px;width:71px;top:466px;height:16px"><span class="t">13:15:00</span></div>
<div class="c" style="left:243px;width:90px;top:466px;height:16px"><span class="t">14:00:00</span></div>
<div class="c" style="left:333px;width:101px;top:466px;height:16px"><span class="t">PST (UTC-8)</span></div>
<div class="c" style="left:434px;width:137px;top:466px;height:16px"><span class="t">Data Migration Meeting</span></div>
<div class="c" style="left:571px;width:101px;top:466px;height:16px"><span class="t">Vihaan Wilson</span></div>
<div class="c" style="left:672px;width:92px;top:466px;height:16px"><span class="t">Customer Success</span></div>
<div class="c" style="left:764px;width:416px;top:466px;height:16px"><span class="t">Isha Davis, Kabir Sharma, Lucas Roy, Maya Khan, Noah Das, Noah Taylor, Riya Thomas, Sophia Wilson</span></div>
<div class="c" style="left:1180px;width:76px;top:466px;height:16px"><span class="t">Google Meet</span></div>
<div class="c" style="left:1256px;width:18px;top:466px;height:16px"></div>
<div class="c" style="left:35px;width:53px;top:482px;height:16px"><span class="t">22</span></div>
<div class="c" style="left:88px;width:84px;top:482px;height:16px"><span class="t">2025-02-03</span></div>
<div class="c" style="left:172px;width:71px;top:482px;height:16px"><span class="t">16:15:00</span></div>
<div class="c" style="left:243px;width:90px;top:482px;height:16px"><span class="t">17:30:00</span></div>
<div class="c" style="left:333px;width:101px;top:482px;height:16px"><span class="t">IST (UTC+5:30)</span></div>
<div class="c" style="left:434px;width:137px;top:482px;height:16px"><span class="t">Data Migration Meeting</span></div>
<div class="c" style="left:571px;width:101px;top:482px;height:16px"><span class="t">Sophia Davis</span></div>
<div class="c" style="left:672px;width:92px;top:482px;height:16px"><span class="t">R&amp;D</span></div>
<div class="c" style="left:764px;width:416px;top:482px;height:16px"><span class="t">Anaya Taylor, Ava Gupta, Ava Singh, Maya Singh, Sophia Taylor</span></div>
<div class="c" style="left:1180px;width:76px;top:482px;height:16px"><span class="t">Microsoft Teams</span></div>
<div class="c" style="left:1256px;width:18px;top:482px;height:16px"></div>
<div class="c" style="left:35px;width:53px;top:498px;height:16px"><span class="t">23</span></div>
<div class="c" style="left:88px;width:84px;top:498px;height:16px"><span class="t">2025-02-04</span></div>
<div class="c" style="left:172px;width:71px;top:498px;height:16px"><span class="t">12:30:00</span></div>
<div class="c" style="left:243px;width:90px;top:498px;height:16px"><span class="t">13:30:00</span></div>
<div class="c" style="left:333px;width:101px;top:498px;height:16px"><span class="t">EST (UTC-5)</span></div>
<div class="c" style="left:434px;width:137px;top:498px;height:16px"><span class="t">Hiring Panel Meeting</span></div>
<div class="c" style="left:571px;width:101px;top:498px;height:16px"><span class="t">Noah Iyer</span></div>
<div class="c" style="left:672px;width:92px;top:498px;height:16px"><span class="t">Finance</span></div>
<div class="c" style="left:764px;width:416px;top:498px;height:16px"><span class="t">Ava Davis, Liam Thomas, Olivia Davis</span></div>
<div class="c" style="left:1180px;width:76px;top:498px;height:16px"><span class="t">Google Meet</span></div>
<div class="c" style="left:1256px;width:18px;top:498px;height:16px"></div>
<div class="c" style="left:35px;width:53px;top:514px;height:16px"><span class="t">24</span></div>
<div class="c" style="left:88px;width:84px;top:514px;height:16px"><span class="t">2025-02-05</span></div>
<div class="c" style="left:172px;width:71px;top:514px;height:16px"><span class="t">15:45:00</span></div>
<div class="c" style="left:243px;width:90px;top:514px;height:16px"><span class="t">17:15:00</span></div>
<div class="c" style="left:333px;width:101px;top:514px;height:16px"><span class="t">PST (UTC-8)</span></div>
<div class="c" style="left:434px;width:137px;top:514px;height:16px"><span class="t">Contract Renewal Meeting</span></div>
<div class="c" style="left:571px;width:101px;top:514px;height:16px"><span class="t">Ethan Sharma</span></div>
<div class="c" style="left:672px;width:92px;top:514px;height:16px"><span class="t">Operations</span></div>
<div class="c" style="left:764px;width:416px;top:514px;height:16px"><span class="t">Amelia Das, Ethan Das, Mia Thomas, Noah Davis, Rohan Davis</span></div>
<div class="c" style="left:1180px;width:76px;top:514px;height:16px"><span class="t">Google Meet</span></div>
<div class="c" style="left:1256px;width:18px;top:514px;height:16px"></div>
<div class="c" style="left:35px;width:53px;top:530px;height:16px"><span class="t">25</span></div>
<div class="c" style="left:88px;width:84px;top:530px;height:16px"><span class="t">2025-02-06</span></div>
<div class="c" style="left:172px;width:71px;top:530px;height:16px"><span class="t">15:30:00</span></div>
<div class="c" style="left:243px;width:90px;top:530px;height:16px"><span class="t">16:45:00</span></div>
<div class="c" style="left:333px;width:101px;top:530px;height:16px"><span class="t">IST (UTC+5:30)</span></div>
<div class="c" style="left:434px;width:137px;top:530px;height:16px"><span class="t">Training Session Meeting</span></div>
<div class="c" style="left:571px;width:101px;top:530px;height:16px"><span class="t">Aarav Brown</span></div>
<div class="c" style="left:672px;width:92px;top:530px;height:16px"><span class="t">Sales</span></div>
<div class="c" style="left:764px;width:416px;top:530px;height:16px"><span class="t">Ava Khan, Olivia Iyer, Riya Singh</span></div>
<div class="c" style="left:1180px;width:76px;top:530px;height:16px"><span class="t">Webex</span></div>
<div class="c" style="left:1256px;width:18px;top:530px;height:16px"></div>
<div class="c" style="left:35px;width:53px;top:546px;height:16px"><span class="t">26</span></div>
<div class="c" style="left:88px;width:84px;top:546px;height:16px"><span class="t">2025-02-07</span></div>
<div class="c" style="left:172px;width:71px;top:546px;height:16px"><span class="t">12:45:00</span></div>
<div class="c" style="left:243px;width:90px;top:546px;height:16px"><span class="t">13:45:00</span></div>
<div class="c" style="left:333px;width:101px;top:546px;height:16px"><span class="t">EST (UTC-5)</span></div>
<div class="c" style="left:434px;width:137px;top:546px;height:16px"><span class="t">Vendor Negotiation Meeting</span></div>
<div class="c" style="left:571px;width:101px;top:546px;height:16px"><span class="t">Vihaan Taylor</span></div>
<div class="c" style="left:672px;width:92px;top:546px;height:16px"><span class="t">Sales</span></div>
<div class="c" style="left:764px;width:416px;top:546px;height:16px"><span class="t">Aarav Das, Amelia Iyer, Arjun Sharma, Emma Das, Ethan Mehta, Maya Iyer, Mia Patel, Vihaan Patel</span></div>
<div class="c" style="left:1180px;width:76px;top:546px;height:16px"><span class="t">Webex</span></div>
<div class="c" style="left:1256px;width:18px;top:546px;height:16px"></div>
<div class="vsb"></div><div class="vthumb"></div>
</div>
</body></html>
